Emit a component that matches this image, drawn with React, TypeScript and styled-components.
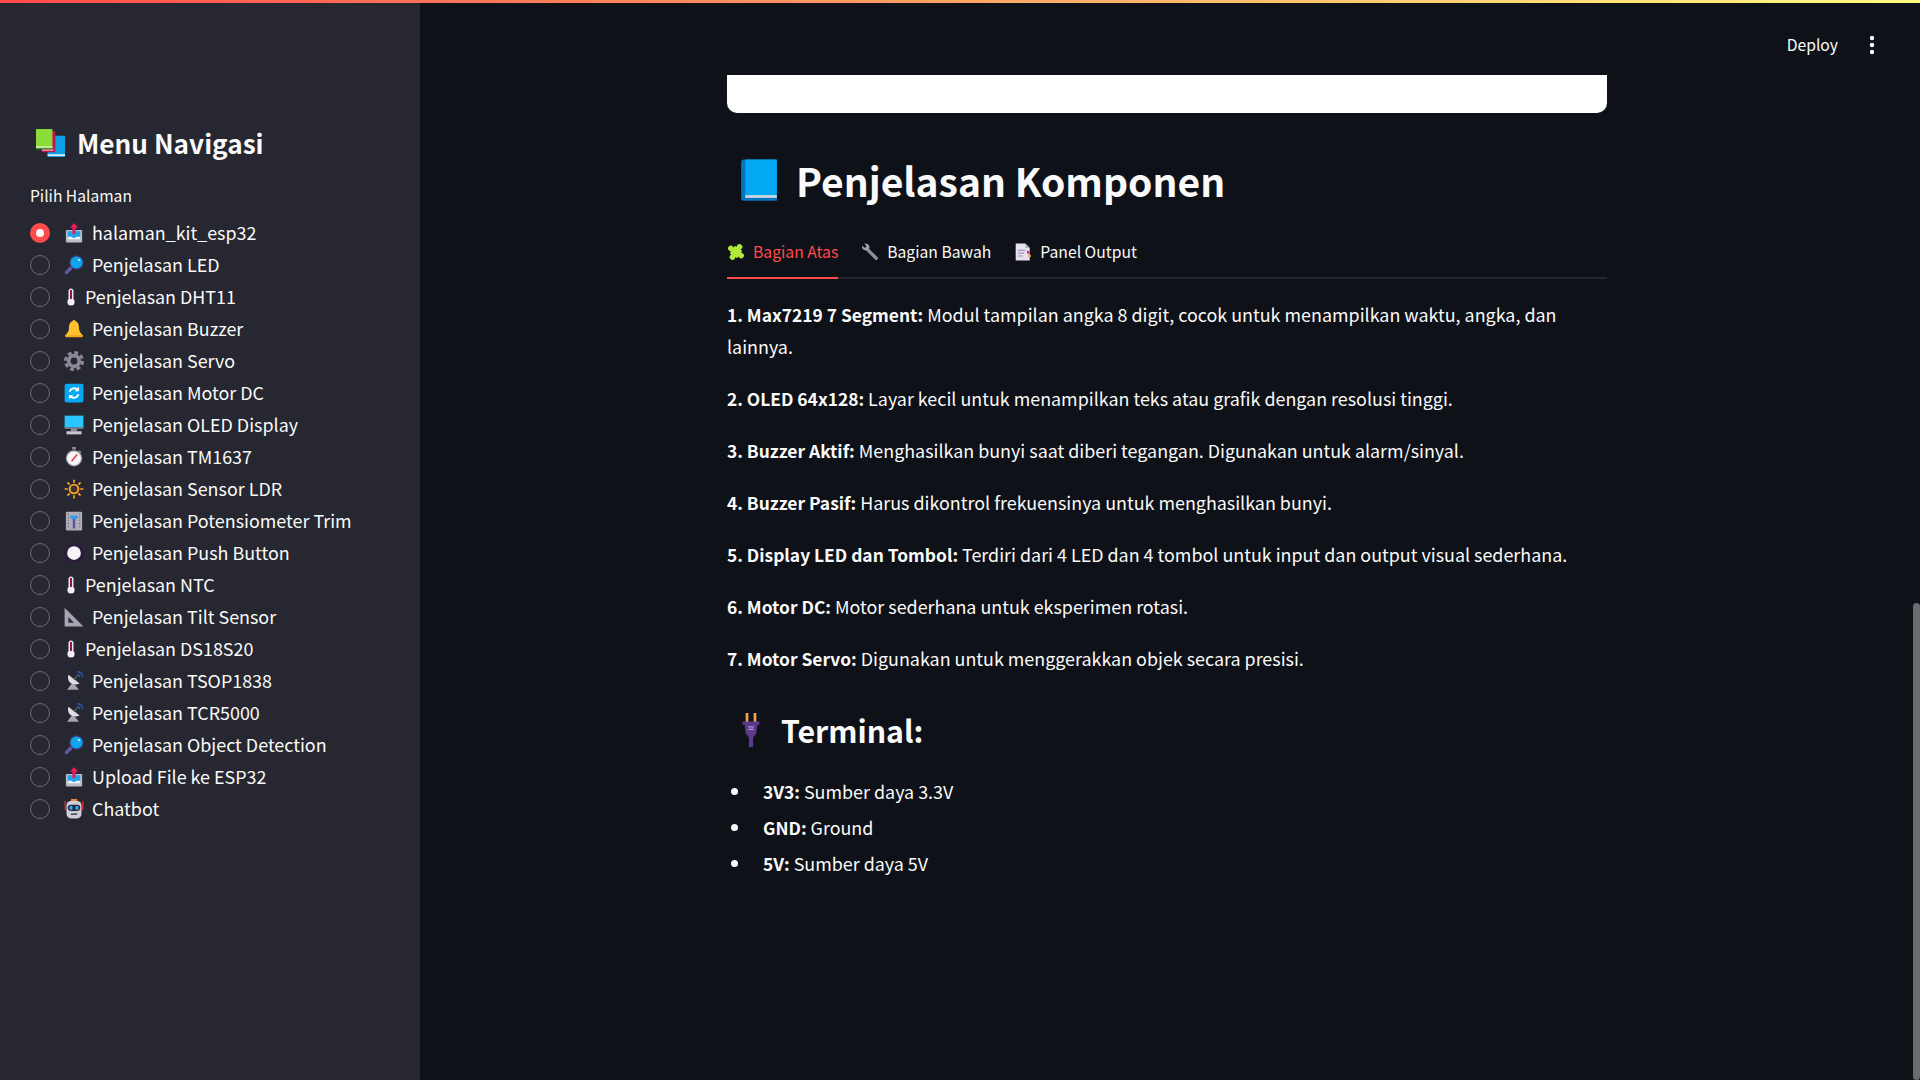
import React from 'react'
import styled, { createGlobalStyle } from 'styled-components'

const FONT = '"Noto Sans CJK SC", "Noto Sans", sans-serif'

const GlobalStyle = createGlobalStyle`
  html, body {
    margin: 0;
    padding: 0;
    height: 100%;
    overflow: hidden;
    background: #0e1117;
  }
  body {
    font-family: ${FONT};
    color: #fafafa;
  }
`

const Page = styled.div`
  position: relative;
  display: flex;
  width: 1920px;
  height: 1080px;
  overflow: hidden;
`

const TopLine = styled.div`
  position: absolute;
  top: 0;
  left: 0;
  right: 0;
  height: 3px;
  background: linear-gradient(90deg, #ff4b4b, #fffd80);
`

const Header = styled.div`
  position: absolute;
  top: 30px;
  right: 44px;
  display: flex;
  align-items: center;
  gap: 30px;
  height: 30px;
`

const DeployLabel = styled.span`
  font-size: 15.700px;
  line-height: 30px;
`

const Scrollbar = styled.div`
  position: absolute;
  right: 0;
  top: 603px;
  bottom: 0;
  width: 7px;
  border-radius: 4px;
  background: #6b6c70;
`

const Sidebar = styled.aside`
  flex: 0 0 420px;
  box-sizing: border-box;
  padding: 120px 30px 0;
  background: #262730;
`

const SidebarTitle = styled.h2`
  display: flex;
  align-items: center;
  gap: 11px;
  margin: 0 0 0 5px;
  font-size: 26.200px;
  line-height: 46px;
  font-weight: 600;
`

const FieldLabel = styled.div`
  margin: 18px 0 11px;
  font-size: 15.600px;
  line-height: 22px;
`

const RadioList = styled.div`
  display: flex;
  flex-direction: column;
`

const RadioRow = styled.div`
  display: flex;
  align-items: center;
  height: 32px;
  font-size: 17.900px;
`

const RadioText = styled.span`
  line-height: 30px;
  padding-bottom: 2px;
`

const RadioDot = styled.span<{ $checked?: boolean }>`
  flex: 0 0 auto;
  box-sizing: border-box;
  display: flex;
  align-items: center;
  justify-content: center;
  width: 20px;
  height: 20px;
  margin-right: 14px;
  border-radius: 50%;
  border: ${(p) => (p.$checked ? 'none' : '1px solid #6c6d74')};
  background: ${(p) => (p.$checked ? '#ff4b4b' : 'transparent')};

  &::after {
    content: '';
    display: ${(p) => (p.$checked ? 'block' : 'none')};
    width: 8px;
    height: 8px;
    border-radius: 50%;
    background: #fafafa;
  }
`

const RadioIcon = styled.span<{ $narrow?: boolean }>`
  flex: 0 0 auto;
  display: flex;
  width: ${(p) => (p.$narrow ? 13 : 20)}px;
  margin-right: 8px;
`

const Main = styled.main`
  flex: 1;
  box-sizing: border-box;
  padding: 75px 0 0 307px;
`

const Content = styled.div`
  width: 880px;
`

const ImageStub = styled.div`
  height: 38px;
  background: #fff;
  border-radius: 0 0 10px 10px;
`

const PageTitle = styled.h1`
  display: flex;
  align-items: center;
  gap: 15px;
  margin: 32px 0 0 10px;
  padding-bottom: 1px;
  font-size: 39px;
  line-height: 70px;
  font-weight: 600;
`

const TabBar = styled.div`
  display: flex;
  gap: 23px;
  margin-top: 16px;
  height: 45px;
  border-bottom: 2px solid #262730;
`

const Tab = styled.div<{ $active?: boolean }>`
  display: flex;
  align-items: flex-start;
  gap: 8px;
  height: 45px;
  font-size: 15.700px;
  line-height: 40px;
  color: ${(p) => (p.$active ? '#ff4b4b' : '#fafafa')};
  border-bottom: ${(p) => (p.$active ? '2px solid #ff4b4b' : '2px solid transparent')};

  svg {
    margin-top: 11px;
  }
`

const Panel = styled.div`
  padding-top: 19px;
`

const Paragraph = styled.p`
  margin: 0 0 20px;
  font-size: 17.900px;
  line-height: 32px;

  strong {
    font-size: 17.400px;
    line-height: 1;
    font-weight: 600;
  }
`

const SectionTitle = styled.h3`
  display: flex;
  align-items: center;
  gap: 13px;
  margin: 34px 0 0 7px;
  font-size: 30.300px;
  line-height: 44px;
  font-weight: 600;
`

const TerminalList = styled.ul`
  margin: 23px 0 0;
  padding: 0 0 0 4px;
  list-style: none;
`

const TerminalItem = styled.li`
  display: flex;
  align-items: center;
  margin: 0 0 4px;
  font-size: 17.900px;
  line-height: 32px;

  &::before {
    content: '';
    flex: 0 0 auto;
    width: 7px;
    height: 7px;
    margin-right: 25px;
    border-radius: 50%;
    background: #fafafa;
  }

  strong {
    font-size: 17.400px;
    line-height: 1;
    font-weight: 600;
  }
`

const Glyph = styled.svg`
  display: block;
  flex: 0 0 auto;
`

type IconProps = { size?: number }

const Icon = ({ size = 20, children }: IconProps & { children: React.ReactNode }) => (
  <Glyph width={size} height={size} viewBox='0 0 32 32'>{children}</Glyph>
)

const Books = ({ size }: IconProps) => (
  <Icon size={size}>
    <rect x='13' y='8' width='18' height='22' rx='1' fill='#0aa0e6' />
    <rect x='13' y='27' width='18' height='2' fill='#cfe9f7' />
    <rect x='7' y='3' width='14' height='22' rx='1' fill='#c2134a' />
    <rect x='7' y='22' width='12' height='1.5' fill='#e9a9bd' />
    <rect x='1' y='1' width='17' height='20' rx='1' fill='#8bdc37' />
    <rect x='1' y='19' width='17' height='1.5' fill='#e6f6d5' />
    <rect x='1' y='20.5' width='17' height='1.5' fill='#4b8f2b' />
  </Icon>
)

const Outbox = ({ size }: IconProps) => (
  <Icon size={size}>
    <path d='M4 11h24a1 1 0 0 1 1 1v17a2 2 0 0 1-2 2H5a2 2 0 0 1-2-2V12a1 1 0 0 1 1-1z' fill='#bdbbc7' />
    <rect x='6' y='13' width='20' height='12' fill='#1ea7e8' />
    <path d='M6 22h7l1 2h4l1-2h7v4H6z' fill='#e8f4fb' />
    <path d='M16 0l6.500 7.500H18.500V18h-5V7.500H9.500z' fill='#ec1c5b' />
  </Icon>
)

const Magnifier = ({ size }: IconProps) => (
  <Icon size={size}>
    <path d='M12 20L4 28' stroke='#5f5a9e' strokeWidth='5.500' strokeLinecap='round' />
    <circle cx='20' cy='12' r='11.500' fill='#3f3a78' />
    <circle cx='20' cy='12' r='9.500' fill='#0ea5ec' />
    <circle cx='24' cy='8' r='1.800' fill='#d9f2ff' />
  </Icon>
)

const Thermometer = () => (
  <Glyph width='12' height='18' viewBox='-2 0 12 18'>
    <rect x='2.500' y='0.500' width='5' height='13' rx='2.500' fill='#e8e6ee' />
    <circle cx='5' cy='14' r='3.600' fill='#f3f1f6' />
    <rect x='4' y='2' width='2' height='9' fill='#9c1238' />
  </Glyph>
)

const Bell = ({ size }: IconProps) => (
  <Icon size={size}>
    <circle cx='16' cy='3.5' r='2.5' fill='#e9a820' />
    <path d='M16 3c6 0 8 5 8 11 0 5 2 8 6 12v2H2v-2c4-4 6-7 6-12 0-6 2-11 8-11z' fill='#fdc02f' />
    <rect x='2' y='26' width='28' height='3' rx='1' fill='#f0a818' />
  </Icon>
)

const Gear = ({ size }: IconProps) => (
  <Icon size={size}>
    <circle cx='16' cy='16' r='13.5' fill='none' stroke='#8c8799' strokeWidth='5' strokeDasharray='6.2 4.4' />
    <circle cx='16' cy='16' r='8.5' fill='none' stroke='#8c8799' strokeWidth='6' />
  </Icon>
)

const Refresh = ({ size }: IconProps) => (
  <Icon size={size}>
    <rect x='1' y='1' width='30' height='30' rx='3' fill='#03a9f4' />
    <path d='M9 14a7.5 7.5 0 0 1 13-3' fill='none' stroke='#fff' strokeWidth='3' />
    <path d='M24 6v7h-7z' fill='#fff' />
    <path d='M23 18a7.5 7.5 0 0 1-13 3' fill='none' stroke='#fff' strokeWidth='3' />
    <path d='M8 26v-7h7z' fill='#fff' />
  </Icon>
)

const Monitor = ({ size }: IconProps) => (
  <Icon size={size}>
    <rect x='1' y='1' width='30' height='19' fill='#29c5ff' />
    <rect x='1' y='20' width='30' height='2' fill='#8e8b9a' />
    <rect x='11' y='22' width='10' height='4' fill='#8e8b9a' />
    <rect x='4' y='26' width='24' height='5' fill='#c9c7d2' />
  </Icon>
)

const Stopwatch = ({ size }: IconProps) => (
  <Icon size={size}>
    <rect x='13' y='0' width='6' height='4' fill='#8e8b9a' />
    <path d='M25 5l3 3-2 2-3-3z' fill='#8e8b9a' />
    <circle cx='16' cy='18' r='13' fill='#a9a6b3' />
    <circle cx='16' cy='18' r='11' fill='#f7f6f9' />
    <path d='M12 23l9-11' stroke='#e53935' strokeWidth='2.4' />
  </Icon>
)

const Sun = ({ size }: IconProps) => (
  <Icon size={size}>
    <circle cx='16' cy='16' r='7' fill='#3a3230' stroke='#ffa726' strokeWidth='3' />
    <path
      d='M16 1v5M16 26v5M1 16h5M26 16h5M5.5 5.5l3.5 3.5M23 23l3.5 3.5M26.500 5.500L23 9M9 23l-3.500 3.500'
      stroke='#ffa726'
      strokeWidth='2.6'
    />
  </Icon>
)

const Slider = ({ size }: IconProps) => (
  <Icon size={size}>
    <rect x='3' y='1' width='26' height='30' rx='2' fill='#aeacb8' />
    <path d='M7 4v24M25 4v24' stroke='#77748a' strokeWidth='2' strokeDasharray='2 3' />
    <rect x='14' y='11' width='4' height='17' fill='#5b55a0' />
    <path d='M10 7h12v4l-4 2h-4l-4-2z' fill='#2f9be8' />
  </Icon>
)

const WhiteCircle = ({ size }: IconProps) => (
  <Icon size={size}>
    <circle cx='16' cy='16' r='15.500' fill='#2b1a3e' />
    <circle cx='16' cy='16' r='11' fill='#f5f4f7' />
  </Icon>
)

const SetSquare = ({ size }: IconProps) => (
  <Icon size={size}>
    <path d='M1 1L31 31H1z' fill='#a9a5b5' />
    <path d='M7 16l9 9H7z' fill='#2b2b36' />
  </Icon>
)

const Antenna = ({ size }: IconProps) => (
  <Icon size={size}>
    <path d='M14 18l-9 12h19z' fill='#a9a6b3' />
    <path d='M7 6c-2 7 1 12 5 14 4 2 9 2 13 0z' fill='#dedce4' />
    <path d='M15 14l7-7' stroke='#8e8b9a' strokeWidth='1.500' />
    <path d='M21 1a9 9 0 0 1 9 9M21 6a4 4 0 0 1 4 4' fill='none' stroke='#2a56b8' strokeWidth='2.500' />
  </Icon>
)

const Robot = ({ size }: IconProps) => (
  <Icon size={size}>
    <path d='M2 3v15M30 3v15' stroke='#d8283a' strokeWidth='2.200' />
    <rect x='11' y='0' width='10' height='4' rx='1' fill='#ef8f30' />
    <rect x='4' y='3' width='24' height='28' rx='7' fill='#cfccd8' />
    <rect x='6' y='9' width='20' height='10' rx='5' fill='#2b2940' />
    <rect x='9' y='11' width='4.500' height='6' rx='2' fill='#29b6f6' />
    <rect x='18.500' y='11' width='4.500' height='6' rx='2' fill='#29b6f6' />
    <rect x='11' y='23' width='10' height='2.500' fill='#4a4860' />
  </Icon>
)

const Puzzle = ({ size }: IconProps) => (
  <Icon size={size}>
    <g transform='rotate(35 16 16)' fill='#b2e83a'>
      <rect x='8' y='8' width='16' height='16' rx='1' />
      <circle cx='16' cy='5' r='5' />
      <circle cx='27' cy='16' r='5' />
      <circle cx='16' cy='27' r='5' />
      <circle cx='5' cy='16' r='5' />
    </g>
  </Icon>
)

const Wrench = ({ size }: IconProps) => (
  <Icon size={size}>
    <path d='M10 10L27 27' stroke='#8e8b9a' strokeWidth='6' strokeLinecap='round' />
    <path d='M2 5l5 4 3-3-4-5c4-1 9 1 9 6 0 3-2 6-6 6-5 0-8-4-7-8z' fill='#a5a2ae' />
  </Icon>
)

const Document = ({ size }: IconProps) => (
  <Icon size={size}>
    <path d='M3 1h17l8 8v22H3z' fill='#e6e0f0' />
    <path d='M20 1l8 8h-8z' fill='#b8b0c8' />
    <path d='M7 13h13M7 18h11M7 23h9' stroke='#9d98aa' strokeWidth='2' />
    <rect x='23' y='14' width='5' height='5' fill='#ec2f8f' />
    <rect x='25' y='21' width='5' height='4' fill='#e8b23a' />
  </Icon>
)

const BlueBook = ({ size }: IconProps) => (
  <Icon size={size}>
    <path d='M3 3a2 2 0 0 1 2-2h24v30H5a2 2 0 0 1-2-2z' fill='#0277bd' />
    <rect x='6' y='1' width='23' height='26' rx='1' fill='#03a9f4' />
    <rect x='6' y='27' width='23' height='2' fill='#cfd8dc' />
  </Icon>
)

const Plug = ({ size }: IconProps) => (
  <Icon size={size}>
    <path d='M11 0h2.500v9H11zM18.500 0H21v9h-2.500z' fill='#f2a64a' />
    <path d='M8 8h16v3h-2l-1 8-3 4v9h-4v-9l-3-4-1-8H8z' fill='#5c3a8a' />
    <path d='M13.500 13h5M13.500 15.500h5' stroke='#b69ad8' strokeWidth='1.200' />
  </Icon>
)

const PAGES: { label: string; icon?: React.ComponentType<IconProps>; narrow?: boolean }[] = [
  { label: 'halaman_kit_esp32', icon: Outbox },
  { label: 'Penjelasan LED', icon: Magnifier },
  { label: 'Penjelasan DHT11', narrow: true },
  { label: 'Penjelasan Buzzer', icon: Bell },
  { label: 'Penjelasan Servo', icon: Gear },
  { label: 'Penjelasan Motor DC', icon: Refresh },
  { label: 'Penjelasan OLED Display', icon: Monitor },
  { label: 'Penjelasan TM1637', icon: Stopwatch },
  { label: 'Penjelasan Sensor LDR', icon: Sun },
  { label: 'Penjelasan Potensiometer Trim', icon: Slider },
  { label: 'Penjelasan Push Button', icon: WhiteCircle },
  { label: 'Penjelasan NTC', narrow: true },
  { label: 'Penjelasan Tilt Sensor', icon: SetSquare },
  { label: 'Penjelasan DS18S20', narrow: true },
  { label: 'Penjelasan TSOP1838', icon: Antenna },
  { label: 'Penjelasan TCR5000', icon: Antenna },
  { label: 'Penjelasan Object Detection', icon: Magnifier },
  { label: 'Upload File ke ESP32', icon: Outbox },
  { label: 'Chatbot', icon: Robot },
]

const App = () => (
  <Page>
    <GlobalStyle />
    <Sidebar>
      <SidebarTitle><Books size={31} />Menu Navigasi</SidebarTitle>
      <FieldLabel>Pilih Halaman</FieldLabel>
      <RadioList>
        {PAGES.map((page, i) => (
          <RadioRow key={page.label}>
            <RadioDot $checked={i === 0} />
            <RadioIcon $narrow={page.narrow}>
              {page.icon ? <page.icon size={20} /> : <Thermometer />}
            </RadioIcon>
            <RadioText>{page.label}</RadioText>
          </RadioRow>
        ))}
      </RadioList>
    </Sidebar>
    <Main>
      <Content>
        <ImageStub />
        <PageTitle><BlueBook size={44} />Penjelasan Komponen</PageTitle>
        <TabBar>
          <Tab $active><Puzzle size={18} />Bagian Atas</Tab>
          <Tab><Wrench size={18} />Bagian Bawah</Tab>
          <Tab><Document size={18} />Panel Output</Tab>
        </TabBar>
        <Panel>
          <Paragraph><strong>1. Max7219 7 Segment:</strong> Modul tampilan angka 8 digit, cocok untuk menampilkan waktu, angka, dan lainnya.</Paragraph>
          <Paragraph><strong>2. OLED 64x128:</strong> Layar kecil untuk menampilkan teks atau grafik dengan resolusi tinggi.</Paragraph>
          <Paragraph><strong>3. Buzzer Aktif:</strong> Menghasilkan bunyi saat diberi tegangan. Digunakan untuk alarm/sinyal.</Paragraph>
          <Paragraph><strong>4. Buzzer Pasif:</strong> Harus dikontrol frekuensinya untuk menghasilkan bunyi.</Paragraph>
          <Paragraph><strong>5. Display LED dan Tombol:</strong> Terdiri dari 4 LED dan 4 tombol untuk input dan output visual sederhana.</Paragraph>
          <Paragraph><strong>6. Motor DC:</strong> Motor sederhana untuk eksperimen rotasi.</Paragraph>
          <Paragraph><strong>7. Motor Servo:</strong> Digunakan untuk menggerakkan objek secara presisi.</Paragraph>
          <SectionTitle><Plug size={34} />Terminal:</SectionTitle>
          <TerminalList>
            <TerminalItem><span><strong>3V3:</strong> Sumber daya 3.3V</span></TerminalItem>
            <TerminalItem><span><strong>GND:</strong> Ground</span></TerminalItem>
            <TerminalItem><span><strong>5V:</strong> Sumber daya 5V</span></TerminalItem>
          </TerminalList>
        </Panel>
      </Content>
    </Main>
    <TopLine />
    <Header>
      <DeployLabel>Deploy</DeployLabel>
      <Glyph width='8' height='20' viewBox='0 0 8 20'>
        <circle cx='4' cy='3' r='2.200' fill='#fafafa' />
        <circle cx='4' cy='10' r='2.200' fill='#fafafa' />
        <circle cx='4' cy='17' r='2.200' fill='#fafafa' />
      </Glyph>
    </Header>
    <Scrollbar />
  </Page>
)

export default App
